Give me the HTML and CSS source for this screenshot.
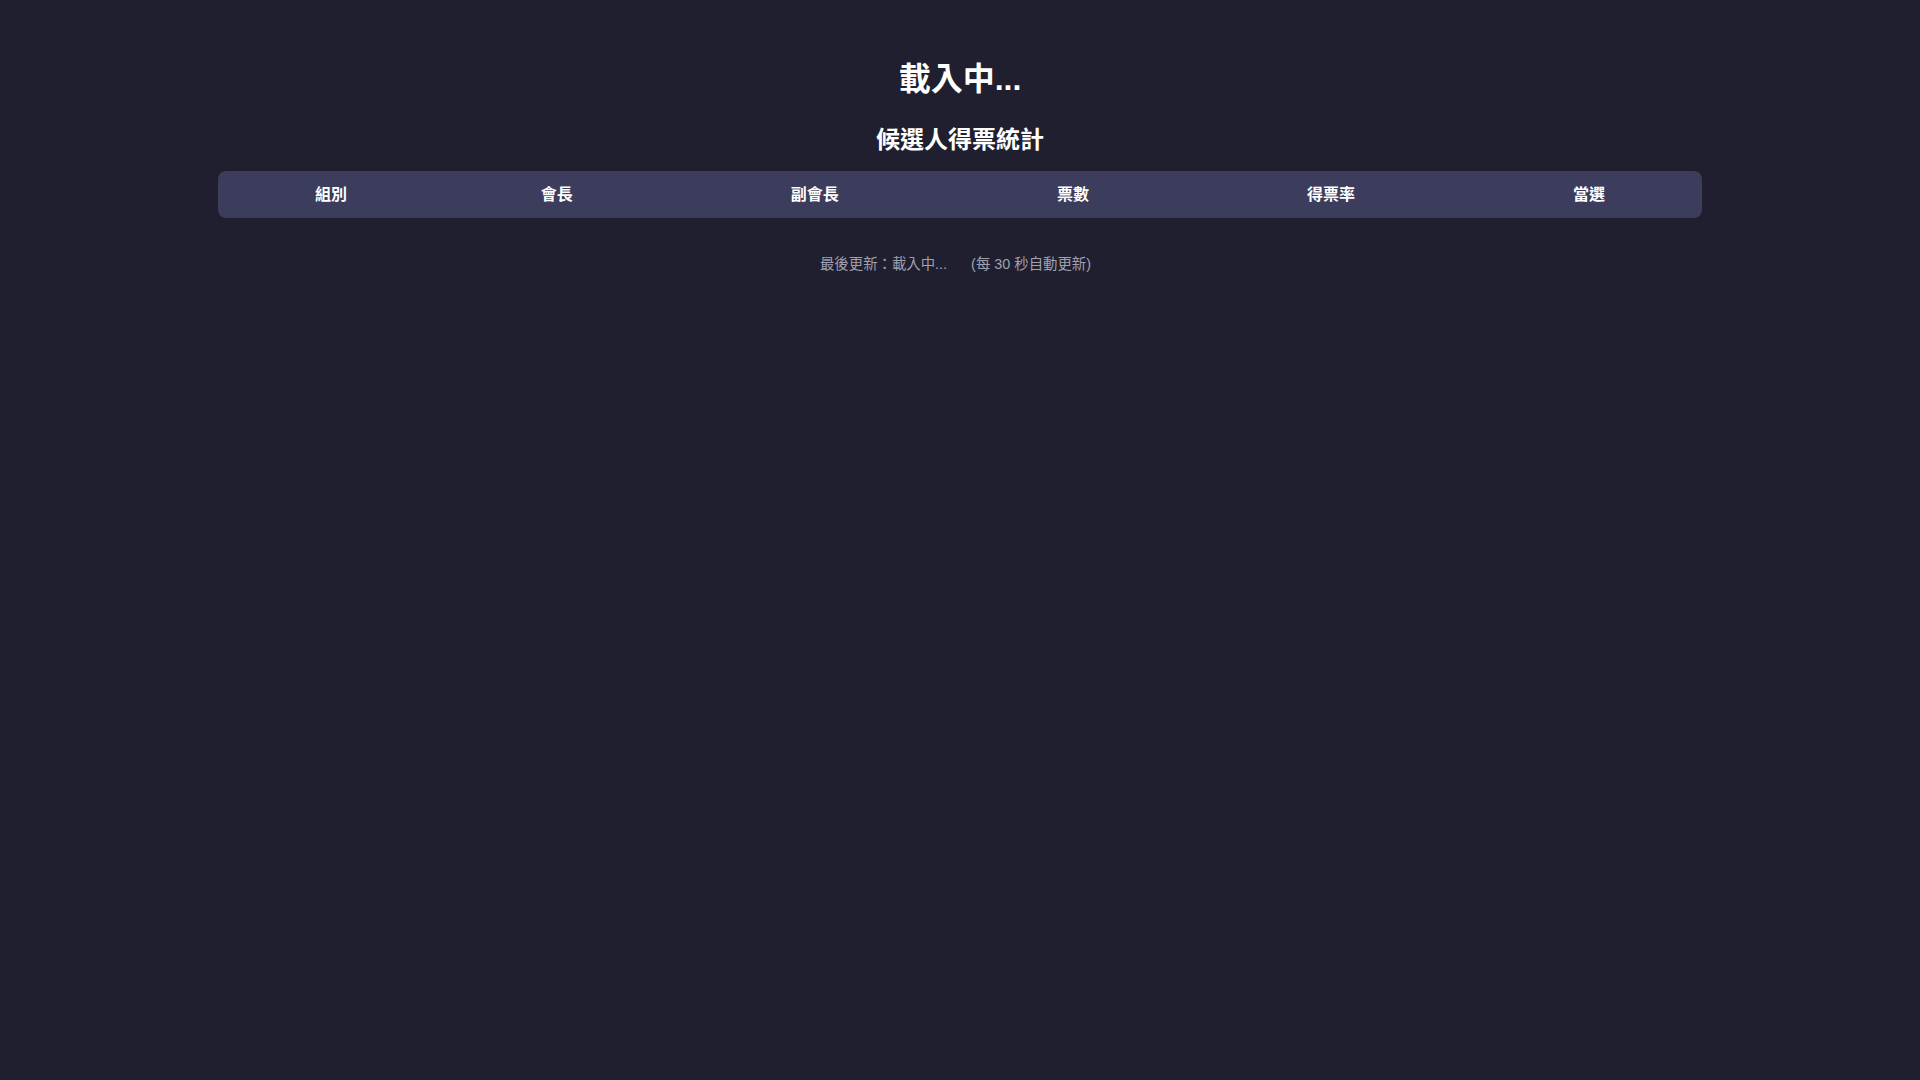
FILE: index.html
```html
<!DOCTYPE html>
<html lang="zh-Hant">
<head>
<meta charset="utf-8">
<title>候選人得票統計</title>
<link rel="stylesheet" href="styles.css">
</head>
<body>
<main class="page">
  <h1 class="title">載入中...</h1>
  <h2 class="subtitle">候選人得票統計</h2>
  <table class="results">
    <thead>
      <tr>
        <th>組別</th>
        <th>會長</th>
        <th>副會長</th>
        <th>票數</th>
        <th>得票率</th>
        <th>當選</th>
      </tr>
    </thead>
    <tbody></tbody>
  </table>
  <p class="footer">最後更新：<span>載入中...</span> <span class="interval">(每 30 秒自動更新)</span></p>
</main>
</body>
</html>
```

FILE: styles.css
```css
html, body {
  margin: 0;
  padding: 0;
  background: #1f1f2f;
}

body {
  font-family: "Liberation Sans", "Noto Sans CJK TC", sans-serif;
  color: #ffffff;
}

.page {
  max-width: 1484px;
  margin: 0 auto;
  padding-top: 59px;
}

.title {
  margin: 0;
  font-size: 32px;
  line-height: 40px;
  font-weight: 700;
  text-align: center;
}

.subtitle {
  margin: 25px 0 15px;
  font-size: 24px;
  line-height: 32px;
  font-weight: 700;
  text-align: center;
}

.results {
  width: 100%;
  border-collapse: separate;
  border-spacing: 0;
  background: #3c3c5c;
  border-radius: 8px;
  overflow: hidden;
}

.results th {
  padding: 12px 12px 11px;
  font-size: 16px;
  line-height: 24px;
  font-weight: 700;
  text-align: center;
  color: #ffffff;
}

.footer {
  margin: 36px 0 0;
  font-size: 14.4px;
  line-height: 20px;
  color: #a0a0b0;
  text-align: center;
}

.interval {
  margin-left: 20px;
  margin-right: 9px;
}
```
